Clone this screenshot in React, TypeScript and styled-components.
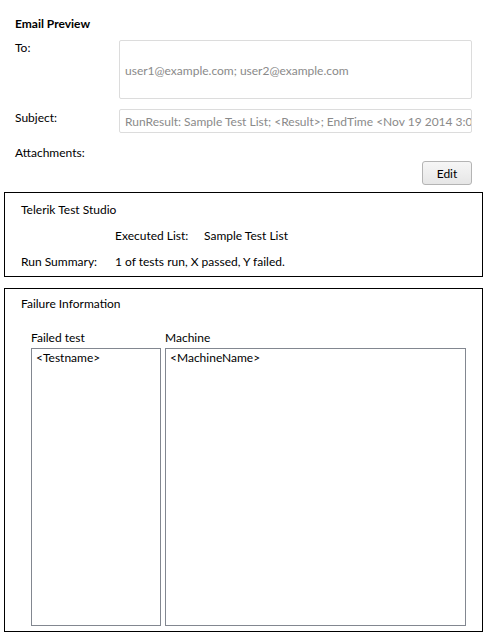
import React from "react";
import styled, { createGlobalStyle } from "styled-components";

const GlobalStyle = createGlobalStyle`
  html, body {
    margin: 0;
    padding: 0;
    background: #ffffff;
  }
  body {
    font-family: Lato, "Noto Sans", sans-serif;
    font-size: 12px;
    color: #000000;
  }
`;

const Page = styled.div`
  width: 488px;
  height: 635px;
  display: flex;
  flex-direction: column;
  padding-top: 16px;
  box-sizing: border-box;
`;

const Header = styled.div`
  display: flex;
  flex-direction: column;
  padding: 0 16px 0 15px;
`;

const Title = styled.div`
  font-weight: bold;
  line-height: 16px;
  margin-bottom: 8px;
`;

const FieldRow = styled.div<{ gap?: number }>`
  display: grid;
  grid-template-columns: 104px 1fr;
  align-items: start;
  margin-bottom: ${(p) => p.gap ?? 0}px;
`;

const Label = styled.div<{ offset?: number }>`
  line-height: 16px;
  padding-top: ${(p) => p.offset ?? 0}px;
`;

const Field = styled.div<{ tall?: boolean }>`
  height: ${(p) => (p.tall ? 59 : 24)}px;
  box-sizing: border-box;
  border: 1px solid #dcdcdc;
  border-radius: 2px;
  padding: 1px 5px 0;
  display: flex;
  align-items: center;
  color: #8a8a8a;
  white-space: nowrap;
  overflow: hidden;
`;

const ButtonRow = styled.div`
  display: flex;
  justify-content: flex-end;
`;

const Button = styled.button`
  width: 50px;
  height: 24px;
  box-sizing: border-box;
  border: 1px solid #b4b4b4;
  border-radius: 3px;
  background: linear-gradient(#f6f6f6, #e6e6e6);
  font-family: inherit;
  font-size: 12px;
  color: #000;
  padding: 0;
`;

const Panel = styled.div<{ grow?: boolean }>`
  margin: 0 5px 0 4px;
  border: 1px solid #000;
  box-sizing: border-box;
  display: flex;
  flex-direction: column;
  ${(p) => (p.grow ? "height: 344px;" : "")}
`;

const SummaryPanel = styled(Panel)`
  margin-top: 7px;
  padding: 9px 16px 6px 16px;
  gap: 10px;
`;

const FailurePanel = styled(Panel)`
  margin-top: 11px;
  padding: 7px 16px 5px 26px;
`;

const Line = styled.div`
  line-height: 16px;
`;

const SummaryGrid = styled.div`
  display: grid;
  grid-template-columns: 94px 89px 1fr;
  row-gap: 10px;
  line-height: 16px;
`;

const PanelTitle = styled.div`
  line-height: 16px;
  margin-left: -10px;
  margin-bottom: 18px;
`;

const Lists = styled.div`
  flex: 1;
  display: grid;
  grid-template-columns: 130px 1fr;
  column-gap: 4px;
  grid-template-rows: 16px 1fr;
  row-gap: 2px;
`;

const ListBox = styled.div`
  border: 1px solid #828790;
  padding: 1px 4px;
  line-height: 16px;
`;

export default function App() {
  return (
    <Page>
      <GlobalStyle />
      <Header>
        <Title>Email Preview</Title>
        <FieldRow gap={10}>
          <Label>To:</Label>
          <Field tall>user1@example.com; user2@example.com</Field>
        </FieldRow>
        <FieldRow gap={12}>
          <Label offset={1}>Subject:</Label>
          <Field>RunResult: Sample Test List; &lt;Result&gt;; EndTime &lt;Nov 19 2014 3:00</Field>
        </FieldRow>
        <Label>Attachments:</Label>
        <ButtonRow>
          <Button>Edit</Button>
        </ButtonRow>
      </Header>
      <SummaryPanel>
        <Line>Telerik Test Studio</Line>
        <SummaryGrid>
          <span />
          <span>Executed List:</span>
          <span>Sample Test List</span>
          <span>Run Summary:</span>
          <span style={{ gridColumn: "2 / 4" }}>1 of tests run, X passed, Y failed.</span>
        </SummaryGrid>
      </SummaryPanel>
      <FailurePanel grow>
        <PanelTitle>Failure Information</PanelTitle>
        <Lists>
          <Line>Failed test</Line>
          <Line>Machine</Line>
          <ListBox>&lt;Testname&gt;</ListBox>
          <ListBox>&lt;MachineName&gt;</ListBox>
        </Lists>
      </FailurePanel>
    </Page>
  );
}
